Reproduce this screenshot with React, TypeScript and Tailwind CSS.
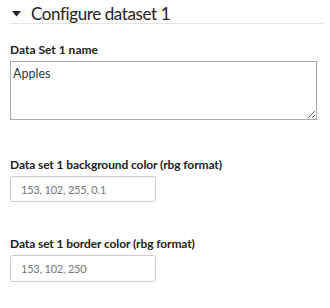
export default function App() {
    return (
        <div className="w-[330px] h-[308px] bg-white px-[10px] pt-[3px]" style={{ fontFamily: 'Lato, "Noto Sans", sans-serif' }}>
            {/* Section header */}
            <div className="flex items-center gap-[10px] pl-[2px] h-[21px] border-b border-[#e5e5e5] w-[313px]">
                <svg width="9" height="6" viewBox="0 0 9 6" className="mt-[1px]">
                    <path d="M0 0 L9 0 L4.5 5.5 Z" fill="#222" />
                </svg>
                <span className="text-[17px] leading-none text-[#222] tracking-[-0.4px]">Configure dataset 1</span>
            </div>

            <div className="mt-[18px] flex flex-col">
                <label className="text-[12px] font-bold text-[#222] leading-[16px]">Data Set 1 name</label>
                <textarea
                    defaultValue="Apples"
                    className="mt-[3px] w-[307px] h-[59px] border border-[#aaa] px-[2px] pt-[4px] text-[12.5px] text-[#2b3a4a] leading-[16px] outline-none"
                />
            </div>

            <div className="mt-[37px] flex flex-col">
                <label className="text-[12px] font-bold text-[#222] leading-[16px] tracking-[-0.1px]">Data set 1 background color (rbg format)</label>
                <input
                    placeholder="153, 102, 255, 0.1"
                    className="mt-[3px] w-[146px] h-[26px] border border-[#ccc] rounded-[3px] px-[10px] text-[11px] tracking-[-0.2px] placeholder:text-[#777] outline-none"
                />
            </div>

            <div className="mt-[34px] flex flex-col">
                <label className="text-[12px] font-bold text-[#222] leading-[16px] tracking-[-0.1px]">Data set 1 border color (rbg format)</label>
                <input
                    placeholder="153, 102, 250"
                    className="mt-[3px] w-[146px] h-[27px] border border-[#ccc] rounded-[3px] px-[10px] text-[11px] tracking-[-0.2px] placeholder:text-[#777] outline-none"
                />
            </div>
        </div>
    );
}
